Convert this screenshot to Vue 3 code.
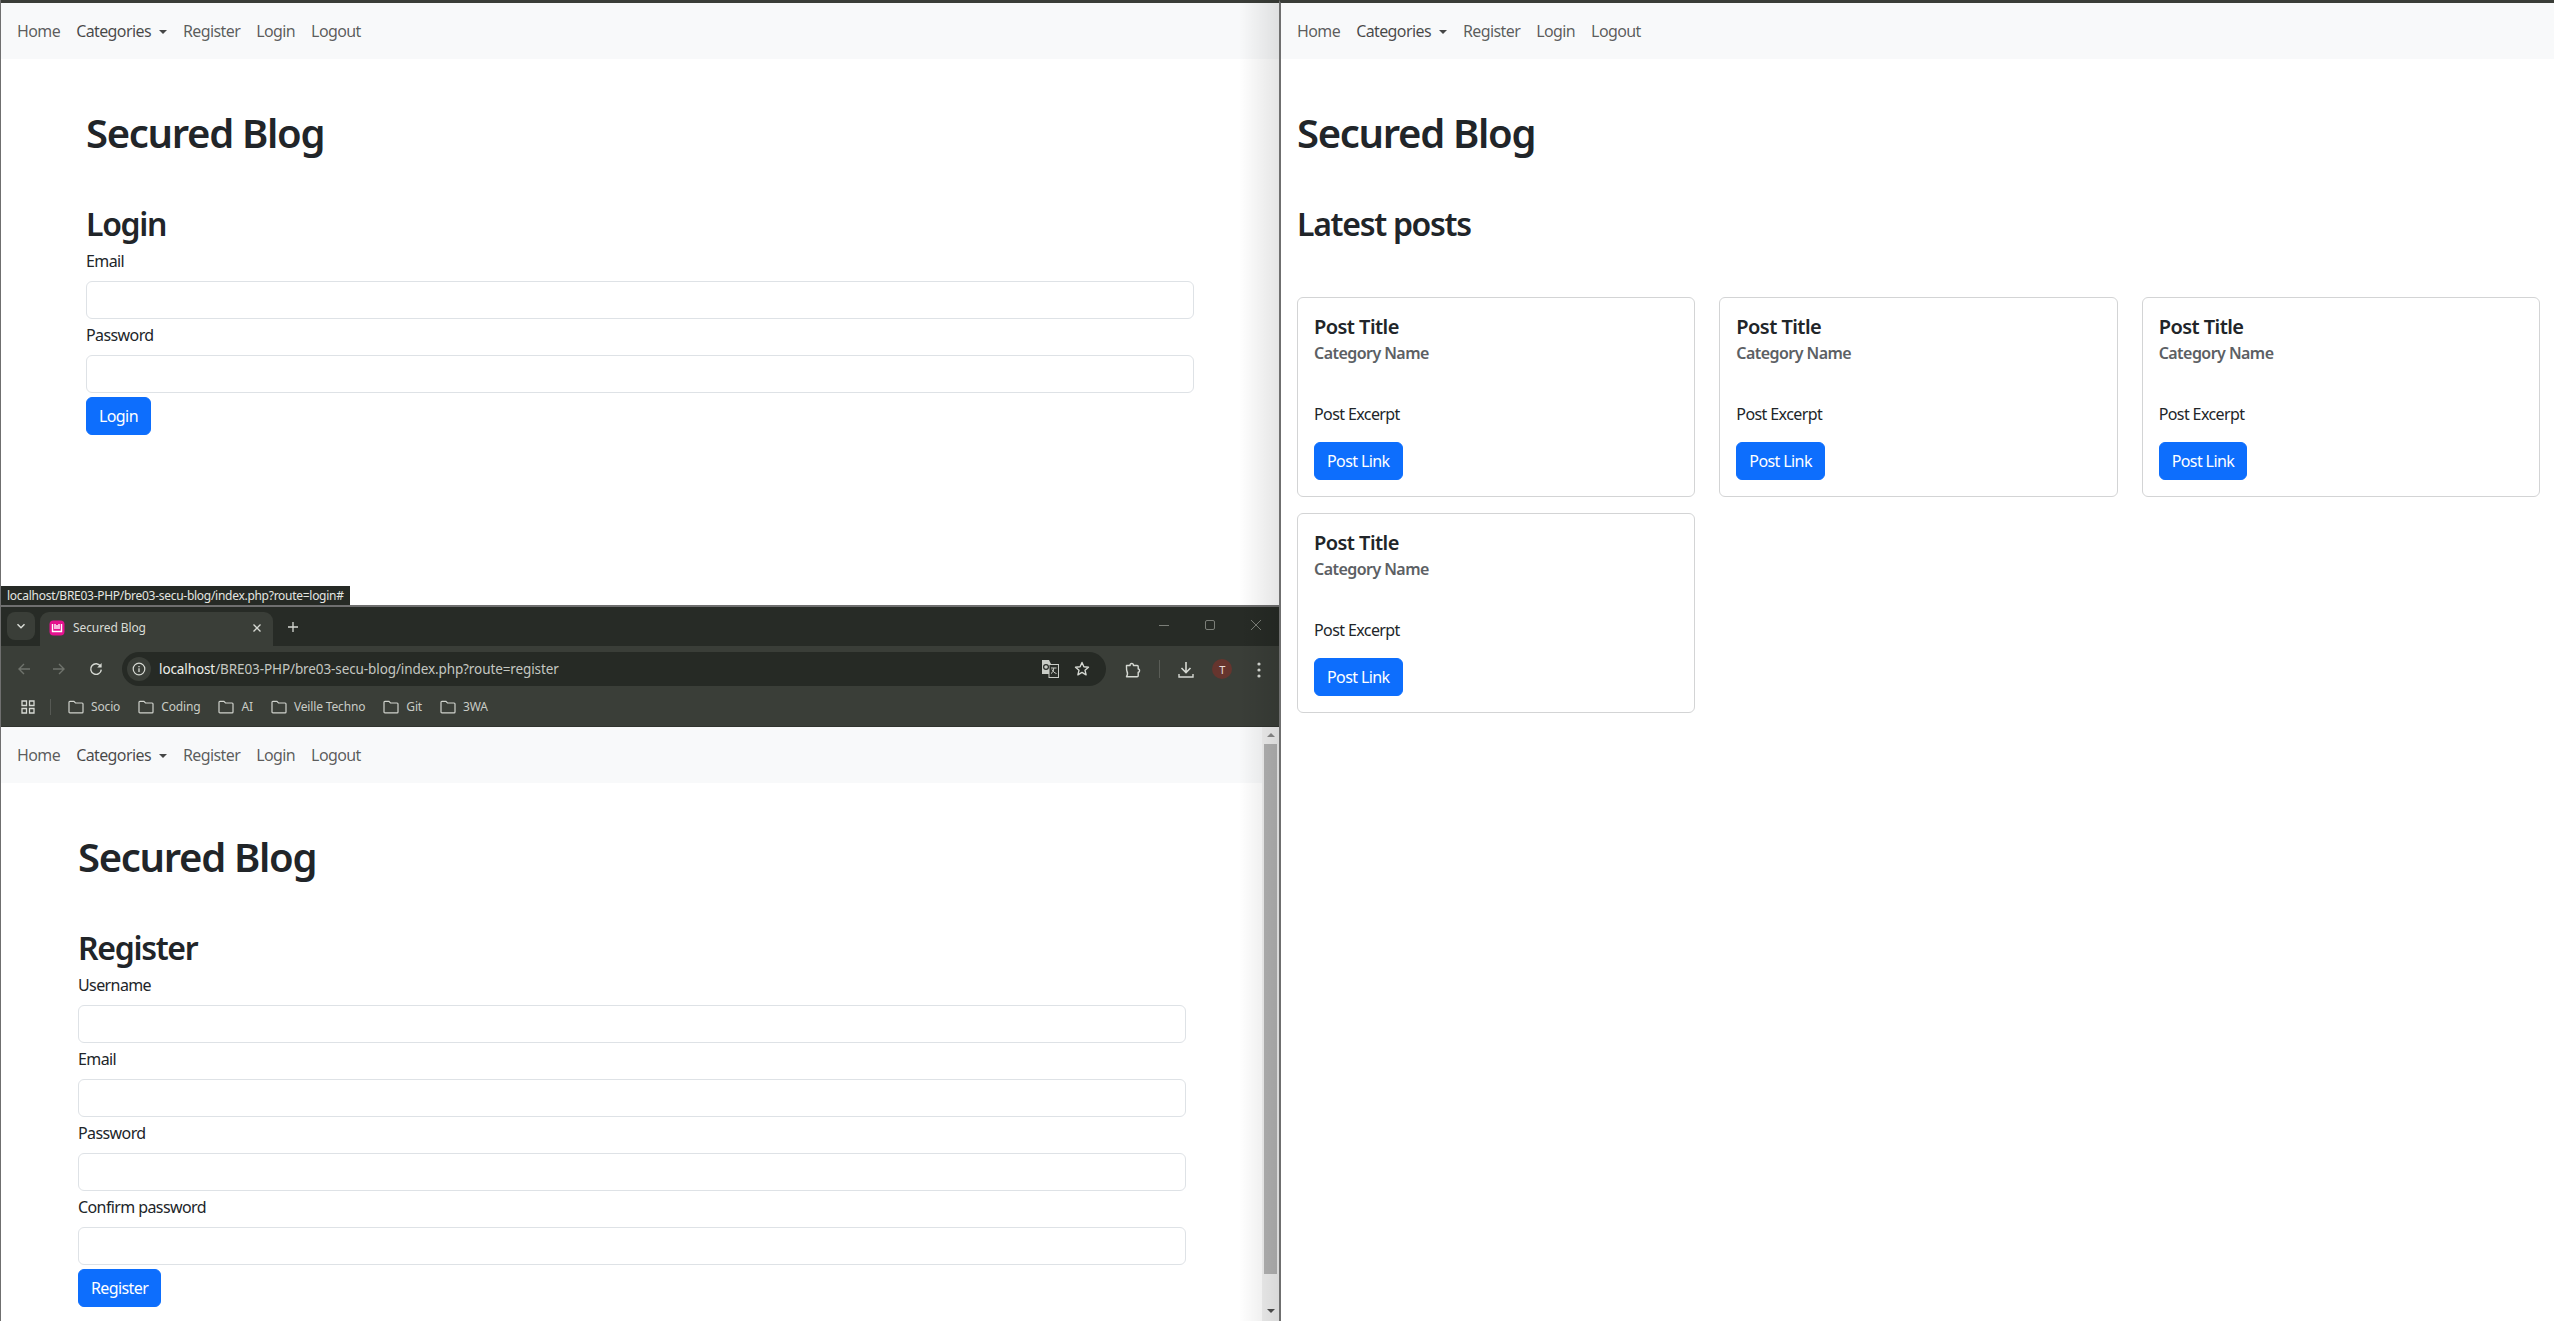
<template>
  <div class="screen">
    <div class="left-col">
      <!-- fenetre login -->
      <section class="win win-top">
        <nav class="navbar">
          <a v-for="l in links" :key="l" class="nav-link" :class="{ dropdown: l === 'Categories' }">{{ l }}</a>
        </nav>
        <main class="page page-login">
          <h1>Secured Blog</h1>
          <h2>Login</h2>
          <div v-for="f in loginFields" :key="f" class="field">
            <label>{{ f }}</label>
            <input class="input" type="text" />
          </div>
          <button class="btn">Login</button>
        </main>
        <div class="status">localhost/BRE03-PHP/bre03-secu-blog/index.php?route=login#</div>
      </section>

      <!-- fenetre register avec le chrome du navigateur -->
      <section class="win win-bottom">
        <div class="tabstrip">
          <span class="tab-menu">
            <svg width="12" height="12" viewBox="0 0 12 12"><path d="M2.500 4.200 6 7.700l3.500-3.500" fill="none" stroke="#d9dcd6" stroke-width="1.5" /></svg>
          </span>
          <div class="tab">
            <svg class="favicon" width="16" height="16" viewBox="0 0 16 16">
              <rect x="0.5" y="0.5" width="15" height="15" rx="4" fill="#e5118f" />
              <path d="M3.500 4v7.500h9V4M6 4v5M10 4v5M8 5v4" fill="none" stroke="#fff" stroke-width="1.4" />
            </svg>
            <span class="tab-title">Secured Blog</span>
            <svg width="10" height="10" viewBox="0 0 10 10"><path d="M1.500 1.500l7 7M8.500 1.500l-7 7" stroke="#d6d9d3" stroke-width="1.3" /></svg>
          </div>
          <svg class="tab-plus" width="12" height="12" viewBox="0 0 12 12"><path d="M6 1v10M1 6h10" stroke="#d6d9d3" stroke-width="1.3" /></svg>
          <div class="win-controls">
            <svg width="12" height="12" viewBox="0 0 12 12"><path d="M1 6.500h10" stroke="#7b7e78" /></svg>
            <svg width="12" height="12" viewBox="0 0 12 12"><rect x="1.500" y="1.500" width="9" height="9" rx="1.500" fill="none" stroke="#7b7e78" /></svg>
            <svg width="12" height="12" viewBox="0 0 12 12"><path d="M1 1l10 10M11 1 1 11" stroke="#7b7e78" /></svg>
          </div>
        </div>

        <div class="toolbar">
          <svg class="tb-back" width="14" height="14" viewBox="0 0 14 14"><path d="M13 7H2M7 2 2 7l5 5" fill="none" stroke="#6f736c" stroke-width="1.4" /></svg>
          <svg class="tb-forward" width="14" height="14" viewBox="0 0 14 14"><path d="M1 7h11M7 2l5 5-5 5" fill="none" stroke="#6f736c" stroke-width="1.4" /></svg>
          <svg class="tb-reload" width="14" height="14" viewBox="0 0 14 14"><path d="M11.600 4.400A5.300 5.300 0 1 0 12.300 7.600" fill="none" stroke="#d6d9d3" stroke-width="1.4" /><path d="M12.600 1v4.400H8.200z" fill="#d6d9d3" /></svg>
          <div class="omnibox">
            <span class="info-chip">
              <svg width="14" height="14" viewBox="0 0 14 14"><circle cx="7" cy="7" r="5.800" fill="none" stroke="#d6d9d3" stroke-width="1.2" /><path d="M7 6.200V10M7 4v1.200" stroke="#d6d9d3" stroke-width="1.3" /></svg>
            </span>
            <span class="url"><b>localhost</b>/BRE03-PHP/bre03-secu-blog/index.php?route=register</span>
            <svg class="translate" width="17" height="18" viewBox="0 0 17 18">
              <path d="M0 0h7l2 4v10H0z" fill="#c9ccc6" />
              <rect x="7" y="4.500" width="9.500" height="13" fill="#2a2e29" stroke="#c9ccc6" />
              <circle cx="4" cy="7" r="2.400" fill="none" stroke="#2a2e29" stroke-width="1.2" />
              <path d="M9 8h5.500M11.700 8c0 3-1 4.500-2.700 5.500M10 9.500c.8 2 2.500 3.500 4.500 4" fill="none" stroke="#c9ccc6" />
            </svg>
            <svg class="star" width="16" height="16" viewBox="0 0 16 16"><path d="M8 1.500l1.900 4.300 4.600.4-3.500 3 1.100 4.600L8 11.400l-4.100 2.400L5 9.200l-3.500-3 4.600-.4z" fill="none" stroke="#d6d9d3" stroke-width="1.4" stroke-linejoin="round" /></svg>
          </div>
          <svg class="puzzle" width="16" height="18" viewBox="0 0 16 18"><path d="M1.500 4.500h3.600c-.5-2.600 3.800-2.600 3.300 0h3.800c.6 0 1 .4 1 1v2.600c1.800-.4 1.800 3.400 0 3v3.600c0 .6-.4 1-1 1H1.500c1.500-2.200 1.500-3.400.4-5.600-.5-1-.4-3.600-.4-5.600z" fill="none" stroke="#d6d9d3" stroke-width="1.4" stroke-linejoin="round" /></svg>
          <span class="tb-sep"></span>
          <svg class="download" width="16" height="18" viewBox="0 0 16 18"><path d="M8 1v10M3.500 7 8 11.500 12.500 7" fill="none" stroke="#d6d9d3" stroke-width="1.6" /><path d="M1 13v3h14v-3" fill="none" stroke="#d6d9d3" stroke-width="1.4" /></svg>
          <span class="avatar">T</span>
          <svg class="kebab" width="4" height="16" viewBox="0 0 4 16"><circle cx="2" cy="2" r="1.600" fill="#d6d9d3" /><circle cx="2" cy="8" r="1.600" fill="#d6d9d3" /><circle cx="2" cy="14" r="1.600" fill="#d6d9d3" /></svg>
        </div>

        <div class="bookmarks">
          <svg class="apps" width="14" height="14" viewBox="0 0 14 14"><path d="M1 1h4.500v4.500H1zM8.500 1H13v4.500H8.500zM1 8.500h4.500V13H1zM8.500 8.500H13V13H8.500z" fill="none" stroke="#d6d9d3" stroke-width="1.3" /></svg>
          <span class="bm-sep"></span>
          <span v-for="b in bookmarks" :key="b" class="bm">
            <svg width="16" height="14" viewBox="0 0 16 14"><path d="M1 2.200c0-.5.400-.9.900-.9h4L7.500 3h6.600c.5 0 .9.400.9.900v8c0 .5-.4.900-.9.900H1.900c-.5 0-.9-.4-.9-.9z" fill="none" stroke="#cfd2cc" stroke-width="1.2" /></svg>
            {{ b }}
          </span>
        </div>

        <div class="viewport">
          <div class="content">
            <nav class="navbar">
              <a v-for="l in links" :key="l" class="nav-link" :class="{ dropdown: l === 'Categories' }">{{ l }}</a>
            </nav>
            <main class="page page-register">
              <h1>Secured Blog</h1>
              <h2>Register</h2>
              <div v-for="f in registerFields" :key="f" class="field">
                <label>{{ f }}</label>
                <input class="input" type="text" />
              </div>
              <button class="btn">Register</button>
            </main>
          </div>
          <div class="scrollbar">
            <span class="arrow arrow-up"></span>
            <span class="thumb"></span>
            <span class="arrow arrow-down"></span>
          </div>
        </div>
      </section>
    </div>

    <!-- fenetre liste des posts -->
    <section class="win win-right">
      <nav class="navbar">
        <a v-for="l in links" :key="l" class="nav-link" :class="{ dropdown: l === 'Categories' }">{{ l }}</a>
      </nav>
      <main class="page page-posts">
        <h1>Secured Blog</h1>
        <h2>Latest posts</h2>
        <div class="cards">
          <article v-for="n in 4" :key="n" class="card">
            <h5>Post Title</h5>
            <h6>Category Name</h6>
            <p>Post Excerpt</p>
            <a class="btn">Post Link</a>
          </article>
        </div>
      </main>
    </section>
  </div>
</template>

<script setup>
const links = ['Home', 'Categories', 'Register', 'Login', 'Logout']
const loginFields = ['Email', 'Password']
const registerFields = ['Username', 'Email', 'Password', 'Confirm password']
const bookmarks = ['Socio', 'Coding', 'AI', 'Veille Techno', 'Git', '3WA']
</script>

<style>
html, body { margin: 0; background: #fff; overflow: hidden; }
</style>

<style scoped>
.screen {
  display: grid; grid-template-columns: 1279px 1fr;
  width: 2554px; height: 1321px; overflow: hidden;
  font-family: "Noto Sans", "Open Sans", sans-serif;
  font-size: 16px; line-height: 24px; color: #212529;
  letter-spacing: -.6px;
}
.left-col { display: flex; flex-direction: column; position: relative; border-left: 1px solid #6f6f6f; }
.left-col::after {
  content: ""; position: absolute; top: 0; bottom: 0; right: 0; width: 40px;
  background: linear-gradient(to right, rgba(0,0,0,0), rgba(0,0,0,.1));
  pointer-events: none;
}
.win { display: flex; flex-direction: column; background: #fff; position: relative; }
.win-top { height: 605px; border-top: 3px solid #3a3d38; box-sizing: border-box; }
.win-bottom { flex: 1; min-height: 0; }
.win-right { border-left: 2px solid #6f6f6f; border-top: 3px solid #3a3d38; }

.navbar { display: flex; height: 56px; align-items: center; padding: 0 8px; background: #f8f9fa; flex: none; }
.nav-link { padding: 8px; color: rgba(0,0,0,.65); white-space: nowrap; }
.nav-link.dropdown { color: rgba(0,0,0,.72); }
.nav-link.dropdown::after {
  content: ""; display: inline-block; margin-left: 8px; vertical-align: 3px;
  border-top: 4.800px solid; border-left: 4.800px solid transparent; border-right: 4.800px solid transparent;
}

h1 { margin: 0 0 48px; font-size: 40px; line-height: 48px; font-weight: 600; letter-spacing: -1.300px; }
h2 { margin: 0 0 6px; font-size: 32px; line-height: 38px; font-weight: 600; letter-spacing: -1.300px; }
.page-login { padding: 50px 85px 0; width: 1108px; }
.page-register { padding: 50px 77px 0; width: 1108px; }
.page-posts { padding: 50px 16px 0; }

label { display: block; margin-bottom: 8px; }
.field { margin-bottom: 4px; }
.input {
  display: block; width: 100%; height: 38px; box-sizing: border-box; padding: 6px 12px;
  border: 1px solid #dee2e6; border-radius: 6px; background: #fff;
}
.btn {
  display: inline-block; box-sizing: border-box; height: 38px; padding: 6px 12px;
  background: #0d6efd; color: #fff; border: 1px solid #0d6efd; border-radius: 6px;
  font: inherit; letter-spacing: inherit;
}

.cards { display: grid; grid-template-columns: repeat(3, 398.330px); gap: 16px 24px; margin-top: 54px; }
.card { height: 200px; box-sizing: border-box; padding: 16px; border: 1px solid #d3d4d5; border-radius: 6px; }
.card h5 { margin: 1px 0 5px; font-size: 20px; line-height: 24px; font-weight: 600; letter-spacing: -.55px; }
.card h6 { margin: 0 0 39px; font-size: 16px; line-height: 19px; font-weight: 600; color: #5c6064; letter-spacing: -.55px; }
.card p { margin: 0 0 16px; }

.status {
  position: absolute; left: 0; bottom: 0; height: 19px; width: 349px; box-sizing: border-box;
  padding: 0 6px; background: #262a25; color: #e4e6e1; font-size: 12px; line-height: 19px; white-space: nowrap;
  letter-spacing: -.28px;
}

.tabstrip {
  display: flex; align-items: flex-end; height: 39px; flex: none; background: #272b26;
  border-top: 2px solid #6f6f6f; padding-left: 6px; color: #d9dcd6; font-size: 12px; letter-spacing: -.1px;
}
.tab-menu {
  display: flex; align-items: center; justify-content: center; align-self: flex-start; margin-top: 5px;
  width: 28px; height: 28px; border-radius: 8px; background: #3a3e38;
}
.tab {
  display: flex; align-items: center; gap: 8px; width: 233px; height: 34px; margin-left: 5px;
  padding: 0 11px 3px 9px; box-sizing: border-box; background: #3a3e38; border-radius: 9px 9px 0 0;
}
.tab-title { flex: 1; }
.tab-plus { margin: 0 0 13px 14px; }
.win-controls { margin-left: auto; display: flex; gap: 34px; align-self: center; padding: 0 17px 4px 0; }

.toolbar {
  display: flex; align-items: flex-start; height: 40px; flex: none; background: #3a3e38; padding-top: 6px;
  box-sizing: content-box; color: #d9dcd6;
}
.toolbar > svg { margin-top: 10px; }
.tb-back { margin-left: 16px; }
.tb-forward { margin-left: 21px; }
.tb-reload { margin-left: 23px; }
.omnibox {
  display: flex; align-items: center; width: 984px; height: 34px; margin-left: 19px; box-sizing: border-box;
  padding: 0 16px 0 5px; background: #262a25; border-radius: 17px;
}
.info-chip {
  display: flex; align-items: center; justify-content: center; width: 24px; height: 24px;
  border-radius: 50%; background: #3a3e38; flex: none;
}
.url { margin-left: 8px; font-size: 13.500px; color: #c4c7c1; white-space: nowrap; flex: 1; letter-spacing: -.1px; }
.url b { font-weight: 400; color: #eef0ea; }
.star { margin-left: 15px; }
.puzzle { margin-left: 19px; margin-top: 9px !important; }
.tb-sep { width: 1px; height: 18px; margin: 8px 0 0 18px; background: #5a5d57; }
.download { margin-left: 18px; margin-top: 9px !important; }
.avatar {
  display: flex; align-items: center; justify-content: center; width: 20px; height: 20px; margin: 7px 0 0 18px;
  border-radius: 50%; background: #66352e; color: #e8dcd8; font-size: 11px; line-height: 1;
}
.kebab { margin-left: 25px; }

.bookmarks {
  display: flex; align-items: center; height: 29px; flex: none; padding: 0 0 5px 20px; box-sizing: content-box;
  background: #3a3e38; color: #c9ccc6; font-size: 12px; letter-spacing: -.15px; border-bottom: 1px solid #30332e;
}
.apps { flex: none; }
.bm-sep { width: 1px; height: 16px; background: #565954; margin: 0 17px 0 15px; }
.bm { display: flex; align-items: center; gap: 7px; margin-right: 18px; white-space: nowrap; }

.viewport { flex: 1; min-height: 0; display: flex; position: relative; }
.content { flex: 1; min-width: 0; overflow: hidden; }
.scrollbar {
  width: 17px; flex: none; display: flex; flex-direction: column; align-items: center;
  background: #f1f1f1; box-sizing: border-box; padding-top: 6px;
}
.thumb { width: 13px; height: 530px; margin: 7px 0 35px; background: #b4b4b4; }
.arrow { width: 0; height: 0; border-left: 4px solid transparent; border-right: 4px solid transparent; }
.arrow-up { border-bottom: 4px solid #8a8a8a; }
.arrow-down { border-top: 4px solid #505050; }
</style>
